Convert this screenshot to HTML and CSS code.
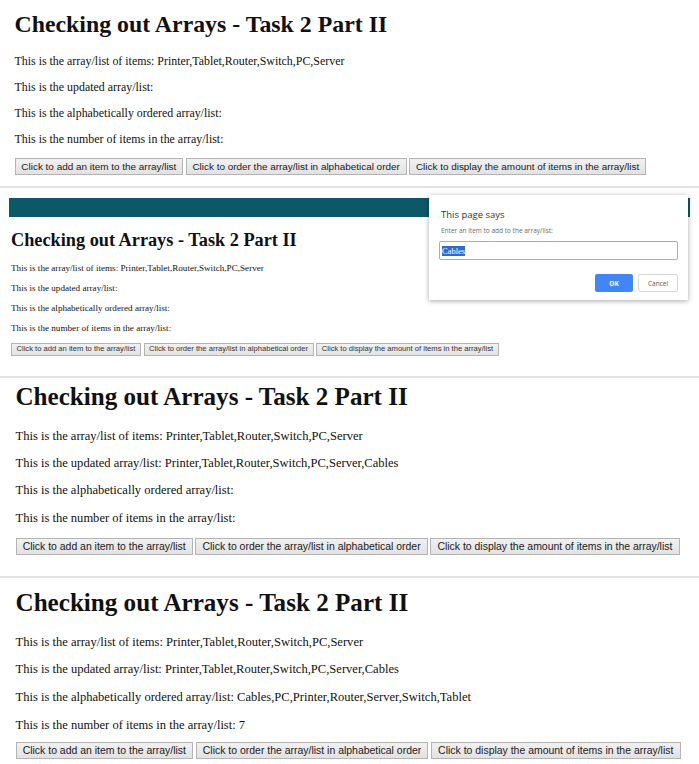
FILE: index.html
```html
<!DOCTYPE html>
<html>
<head>
<meta charset="utf-8">
<title>Checking out Arrays - Task 2 Part II</title>
<link rel="stylesheet" href="styles.css">
</head>
<body>
<section class="panel p1">
  <h1 class="title">Checking out Arrays - Task 2 Part II</h1>
  <p class="line">This is the array/list of items: Printer,Tablet,Router,Switch,PC,Server</p>
  <p class="line">This is the updated array/list:</p>
  <p class="line">This is the alphabetically ordered array/list:</p>
  <p class="line">This is the number of items in the array/list:</p>
  <div class="buttons">
    <button class="btn">Click to add an item to the array/list</button>
    <button class="btn">Click to order the array/list in alphabetical order</button>
    <button class="btn">Click to display the amount of items in the array/list</button>
  </div>
</section>

<section class="panel p2">
  <div class="topbar"></div>
  <h1 class="title">Checking out Arrays - Task 2 Part II</h1>
  <p class="line">This is the array/list of items: Printer,Tablet,Router,Switch,PC,Server</p>
  <p class="line">This is the updated array/list:</p>
  <p class="line">This is the alphabetically ordered array/list:</p>
  <p class="line">This is the number of items in the array/list:</p>
  <div class="buttons">
    <button class="btn">Click to add an item to the array/list</button>
    <button class="btn">Click to order the array/list in alphabetical order</button>
    <button class="btn">Click to display the amount of items in the array/list</button>
  </div>
  <div class="dialog">
    <div class="dlg-title">This page says</div>
    <div class="dlg-msg">Enter an item to add to the array/list:</div>
    <div class="dlg-input"><span class="sel">Cables</span></div>
    <div class="dlg-actions">
      <span class="dlg-ok">OK</span>
      <span class="dlg-cancel">Cancel</span>
    </div>
  </div>
</section>

<section class="panel p3">
  <h1 class="title">Checking out Arrays - Task 2 Part II</h1>
  <p class="line">This is the array/list of items: Printer,Tablet,Router,Switch,PC,Server</p>
  <p class="line">This is the updated array/list: Printer,Tablet,Router,Switch,PC,Server,Cables</p>
  <p class="line">This is the alphabetically ordered array/list:</p>
  <p class="line">This is the number of items in the array/list:</p>
  <div class="buttons">
    <button class="btn">Click to add an item to the array/list</button>
    <button class="btn">Click to order the array/list in alphabetical order</button>
    <button class="btn">Click to display the amount of items in the array/list</button>
  </div>
</section>

<section class="panel p4">
  <h1 class="title">Checking out Arrays - Task 2 Part II</h1>
  <p class="line">This is the array/list of items: Printer,Tablet,Router,Switch,PC,Server</p>
  <p class="line">This is the updated array/list: Printer,Tablet,Router,Switch,PC,Server,Cables</p>
  <p class="line">This is the alphabetically ordered array/list: Cables,PC,Printer,Router,Server,Switch,Tablet</p>
  <p class="line">This is the number of items in the array/list: 7</p>
  <div class="buttons">
    <button class="btn">Click to add an item to the array/list</button>
    <button class="btn">Click to order the array/list in alphabetical order</button>
    <button class="btn">Click to display the amount of items in the array/list</button>
  </div>
</section>
</body>
</html>
```

FILE: styles.css
```css
html, body {
  margin: 0;
  padding: 0;
  background: #ffffff;
}

body {
  width: 699px;
  height: 764px;
  overflow: hidden;
  font-family: "Liberation Serif", "Times New Roman", serif;
  color: #111;
}

.panel {
  position: relative;
  box-sizing: border-box;
  overflow: hidden;
  border-bottom: 2px solid #e1e1e1;
}

.title {
  font-size: 2em;
  font-weight: bold;
  line-height: 1.15;
  margin: 0 0 0.67em 0;
  white-space: nowrap;
}

.line {
  margin: 1em 0;
  line-height: 1.18;
  white-space: nowrap;
}

.title + .line {
  margin-top: 0;
}

.buttons {
  display: flex;
  gap: 0.2em;
  margin-top: 1em;
}

.btn {
  font-family: "Liberation Sans", Arial, sans-serif;
  font-size: 0.8333em;
  line-height: 1.15;
  color: #1a1a1a;
  padding: 0.15em 0.59em;
  margin: 0;
  border: 1px solid #b4b4b4;
  border-radius: 0;
  background: linear-gradient(#f1f1f1, #e2e2e2);
  white-space: nowrap;
}

/* panel 1 */
.p1 {
  height: 188px;
  font-size: 11.92px;
  padding: 11px 0 0 14.5px;
}

/* panel 2 */
.p2 {
  height: 190px;
  font-size: 9.14px;
  padding: 10px 0 0 11px;
}

.p2 .buttons {
  gap: 0.3em;
}

.topbar {
  width: 681px;
  height: 19px;
  margin-left: -2px;
  background: #0b5968;
}

.p2 .title {
  margin-top: 13px;
}

.p2 .btn {
  color: #333;
}

.dialog {
  position: absolute;
  left: 429px;
  top: 7px;
  width: 259px;
  height: 105px;
  box-sizing: border-box;
  padding: 13px 10px 0 10px;
  background: #ffffff;
  box-shadow: 0 1px 5px rgba(0, 0, 0, 0.35);
  font-family: "Open Sans", "Noto Sans", sans-serif;
}

.dlg-title {
  font-size: 9.5px;
  line-height: 13px;
  color: #333;
  margin-left: 2px;
}

.dlg-msg {
  font-size: 6.5px;
  line-height: 10px;
  color: #6a6a6a;
  margin: 5px 0 0 2px;
}

.dlg-input {
  box-sizing: border-box;
  width: 239px;
  height: 19px;
  margin-top: 5px;
  border: 1px solid #8fb2e6;
  border-radius: 2px;
  padding: 3px 2px 0 2px;
  font-size: 8.5px;
  line-height: 11px;
}

.sel {
  background: #2d6bd4;
  color: #ffffff;
  font-family: "Liberation Serif", serif;
}

.dlg-actions {
  display: flex;
  justify-content: flex-end;
  gap: 5px;
  margin-top: 14px;
  width: 239px;
}

.dlg-ok,
.dlg-cancel {
  box-sizing: border-box;
  height: 18px;
  display: flex;
  align-items: center;
  justify-content: center;
  font-size: 6.5px;
  border-radius: 2px;
}

.dlg-ok {
  width: 38px;
  background: #4285f4;
  color: #ffffff;
  font-weight: bold;
}

.dlg-cancel {
  width: 40px;
  border: 1px solid #d6d6d6;
  color: #555;
  background: #ffffff;
}

/* panel 3 */
.p3 {
  height: 200px;
  font-size: 12.54px;
  padding: 5px 0 0 15.5px;
}

/* panel 4 */
.p4 {
  height: 186px;
  font-size: 12.56px;
  padding: 11px 0 0 15.5px;
  border-bottom: none;
}

.p4 .line {
  line-height: 1.2;
}

.p4 .buttons {
  margin-top: -3px;
}
```
